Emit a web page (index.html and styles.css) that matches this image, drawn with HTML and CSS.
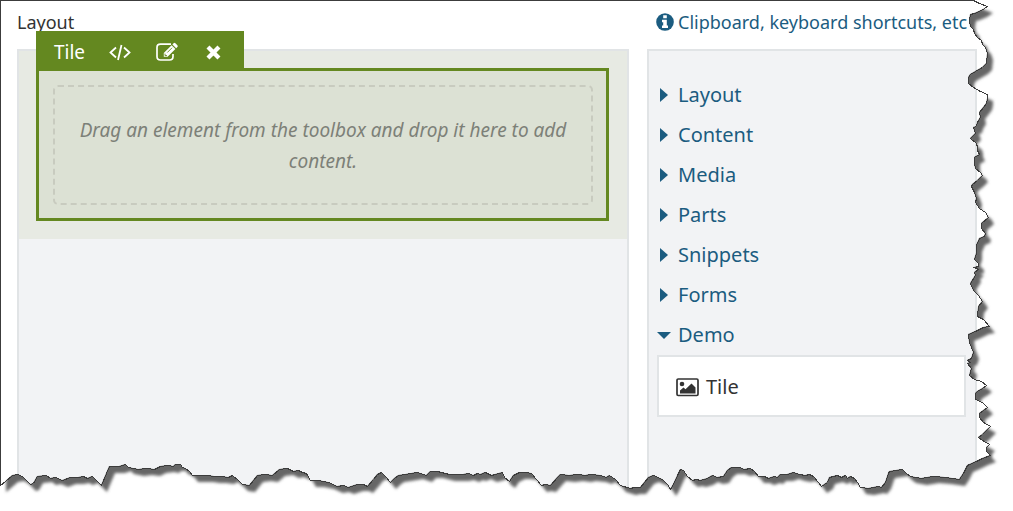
FILE: index.html
```html
<!DOCTYPE html>
<html lang="en">
<head>
<meta charset="utf-8">
<title>Layout editor</title>
<link rel="stylesheet" href="styles.css">
</head>
<body>
<main class="page">
  <section class="editor">
    <h1 class="editor-title">Layout</h1>
    <div class="panel canvas">
      <div class="canvas-root">
        <div class="tile">
          <div class="toolbar">
            <span class="toolbar-name">Tile</span>
            <button class="tool" type="button" aria-label="Edit code">
              <svg class="icon" width="24" height="20" viewBox="0 0 24 20"><path d="M8 5.500 2.500 10.500 8 15.500M16 5.500 21.500 10.500 16 15.500M13.500 3 10 18" fill="none" stroke="#fff" stroke-width="1.800"/></svg>
            </button>
            <button class="tool" type="button" aria-label="Edit">
              <svg class="icon" width="24" height="20" viewBox="0 0 24 20"><path d="M16 2.200H5.500Q2 2.200 2 5.500V14.500Q2 18 5.500 18H14.500Q18 18 18 14.500V12" fill="none" stroke="#fff" stroke-width="1.700"/><path d="M8.800 14.800V11L16.600 3.200 20.400 7 12.600 14.800ZM17.400 2.400 18.600 1.200Q19.500.4 20.400 1.200L22.400 3.200Q23.200 4.100 22.400 5L21.200 6.200Z" fill="#fff"/><path d="M10 11.600V13.600H12M12.300 10.500 17 5.800" fill="none" stroke="#648820" stroke-width=".9"/></svg>
            </button>
            <button class="tool" type="button" aria-label="Remove">
              <svg class="icon" width="24" height="20" viewBox="0 0 24 20"><path d="M6.800 5.800 16.200 15.200M16.200 5.800 6.800 15.200" stroke="#fff" stroke-width="5" stroke-linecap="square" stroke-linejoin="round" transform="translate(1.700 1.600) scale(.85)"/></svg>
            </button>
          </div>
          <p class="placeholder">Drag an element from the toolbox and drop it here to add content.</p>
        </div>
      </div>
    </div>
  </section>
  <aside class="toolbox">
    <a class="help" href="#help"><svg class="icon" width="18" height="18" viewBox="0 0 18 18"><circle cx="9" cy="9" r="8.800" fill="#1b5c80"/><path d="M7.200 2.300H10.800V5.300H7.200ZM6 6.800H10.800V12.500H12V15H6V12.500H7.200V9.200H6Z" fill="#fff"/></svg>Clipboard, keyboard shortcuts, etc</a>
    <div class="panel categories">
      <button class="category" type="button"><span class="caret"></span>Layout</button>
      <button class="category" type="button"><span class="caret"></span>Content</button>
      <button class="category" type="button"><span class="caret"></span>Media</button>
      <button class="category" type="button"><span class="caret"></span>Parts</button>
      <button class="category" type="button"><span class="caret"></span>Snippets</button>
      <button class="category" type="button"><span class="caret"></span>Forms</button>
      <button class="category" type="button" aria-expanded="true"><span class="caret caret-open"></span>Demo</button>
      <div class="element"><svg class="icon" width="24" height="20" viewBox="0 0 24 20"><rect x="1" y="2" width="21" height="16.500" rx="1.200" fill="none" stroke="#333" stroke-width="1.700"/><circle cx="6" cy="7" r="2.300" fill="#333"/><path d="M4 16.500V13.500L7.500 10.500 9.500 12.300 15.500 6.500 19.500 10.500V16.500Z" fill="#333"/></svg>Tile</div>
    </div>
  </aside>
  <svg class="torn" viewBox="0 0 1013 511" preserveAspectRatio="none" aria-hidden="true">
    <defs>
      <path id="paper" d="M0 0H973L979 3 987 6 981 10 974 13 970 14 969 20 970 26 973 29 974 33 977 37 981 40 982 44 985 47 987 53 986 63 982 67 975 71 970 74 968 77 968 83 973 87 980 91 987 94 987 98 986 103 983 107 979 112 980 117 977 122 976 126 973 127 975 133 970 138 976 143 977 147 977 150 979 154 974 157 974 163 975 168 980 172 982 175 977 180 972 184 971 186 974 192 976 198 975 202 979 208 985 212 988 217 981 223 981 228 985 233 984 236 979 238 976 245 976 253 974 259 978 263 978 266 974 267 978 269 974 272 975 275 970 283 973 290 978 295 982 301 978 306 977 316 983 319 989 326 983 327 975 331 968 334 969 342 971 347 973 352 971 358 967 360 970 362 967 363 971 368 969 375 974 379 981 381 986 385 982 388 977 391 975 393 975 399 982 402 987 407 983 410 979 413 979 417 983 422 990 426 986 430 982 434 978 437 982 440 989 444 986 447 986 451 990 455 982 458 976 461 967 465 963 473 959 479 952 478 945 477 933 476 927 477 921 478 910 476 906 473 902 469 889 471 888 473 885 482 881 487 878 486 873 487 868 488 860 487 857 482 854 478 850 476 847 478 845 475 841 477 837 475 829 477 827 482 821 486 818 482 813 476 809 474 805 475 799 474 793 472 787 474 780 474 777 477 774 476 768 478 764 476 758 476 754 471 750 468 744 469 739 467 731 467 727 470 723 476 717 477 712 475 707 478 700 480 696 479 692 480 687 476 683 470 680 469 678 473 673 484 670 489 667 484 662 479 653 475 648 477 640 487 634 487 630 488 620 485 615 479 609 475 606 477 600 475 590 474 585 475 577 474 569 475 560 474 557 477 550 485 545 484 541 485 536 479 531 473 525 472 519 472 513 475 509 481 504 477 502 472 495 474 491 475 485 472 480 474 477 473 473 475 468 473 463 474 449 474 437 471 430 471 426 475 417 472 405 474 398 475 394 478 390 482 385 476 381 472 377 474 373 479 367 486 363 484 357 484 348 487 343 485 337 486 328 482 318 480 310 480 306 473 302 472 298 470 293 471 287 468 279 469 272 475 265 474 257 475 249 485 242 484 238 480 232 475 228 477 220 476 214 476 207 475 192 475 189 471 185 468 182 467 180 464 175 464 173 466 168 465 160 466 154 469 146 468 138 469 128 467 125 464 119 466 109 466 106 473 101 485 97 481 92 476 87 478 83 476 78 477 70 477 62 480 55 477 50 478 46 475 37 476 33 483 30 484 23 477 18 474 12 475 5 481 0 485Z"/>
      <filter id="soft" x="-5%" y="-5%" width="110%" height="110%"><feGaussianBlur stdDeviation="1.500"/></filter>
      <mask id="outside" maskUnits="userSpaceOnUse" x="0" y="0" width="1013" height="511">
        <rect width="1013" height="511" fill="#fff"/>
        <use href="#paper" fill="#000"/>
      </mask>
    </defs>
    <g mask="url(#outside)">
      <rect width="1013" height="511" fill="#fff"/>
      <use href="#paper" x="6" y="7" fill="#666" filter="url(#soft)"/>
    </g>
    <use href="#paper" x=".5" y=".5" fill="none" stroke="#3c3c3c" shape-rendering="crispEdges"/>
  </svg>
</main>
</body>
</html>
```
FILE: styles.css
```css
* {
  box-sizing: border-box;
}

body {
  margin: 0;
  background: #fff;
  color: #333;
  font-family: "Noto Sans", "Open Sans", sans-serif;
  font-size: 19px;
  line-height: 30px;
}

button {
  border: 0;
  padding: 0;
  background: none;
  color: inherit;
  font: inherit;
  text-align: left;
}

.icon {
  flex: none;
}

.page {
  position: relative;
  display: grid;
  grid-template-columns: minmax(0, 1fr) 330px;
  gap: 18px;
  min-height: 100vh;
  padding: 7px 36px 0 17px;
  overflow: hidden;
}

.editor,
.toolbox {
  display: flex;
  flex-direction: column;
  gap: 12px;
  min-width: 0;
}

.editor-title {
  margin: 0;
  font-size: 18px;
  font-weight: 400;
}

.panel {
  flex: 1;
  border: 2px solid #e1e4e6;
  border-bottom: 0;
  background: #f2f3f5;
}

.canvas-root {
  padding: 17px 18px 18px 17px;
  background: #e7eae3;
}

.tile {
  position: relative;
  padding: 14px 13px 13px 14px;
  border: 3px solid #648820;
  background: #dce1d4;
}

.toolbar {
  position: absolute;
  bottom: 100%;
  left: -3px;
  display: flex;
  align-items: center;
  gap: 23px;
  height: 40px;
  padding: 2px 18px 0 18px;
  background: #648820;
  color: #fff;
}

.tool {
  display: flex;
}

.placeholder {
  margin: 0;
  padding: 28px 20px 26px;
  border: 2px dashed #c8cbbf;
  border-radius: 5px;
  color: #7c8078;
  font-style: italic;
  line-height: 31px;
  text-align: center;
}

.help {
  display: flex;
  align-items: center;
  gap: 4px;
  padding-left: 9px;
  color: #1b5c80;
  font-size: 18px;
  text-decoration: none;
  white-space: nowrap;
}

.categories {
  padding: 24px 9px 0 8px;
  font-size: 20px;
}

.category {
  display: flex;
  align-items: center;
  gap: 7px;
  width: 100%;
  height: 40px;
  color: #1b5c80;
}

.caret {
  width: 14px;
  height: 14px;
  background: #1b5c80;
  clip-path: polygon(3px 0, 11px 7px, 3px 14px);
}

.caret-open {
  clip-path: polygon(0 4px, 14px 4px, 7px 11px);
}

.element {
  display: flex;
  align-items: center;
  gap: 6px;
  height: 62px;
  padding: 2px 17px 0;
  border: 2px solid #e1e4e6;
  background: #fff;
}

.torn {
  position: absolute;
  inset: 0;
  width: 100%;
  height: 100%;
  pointer-events: none;
}
```
